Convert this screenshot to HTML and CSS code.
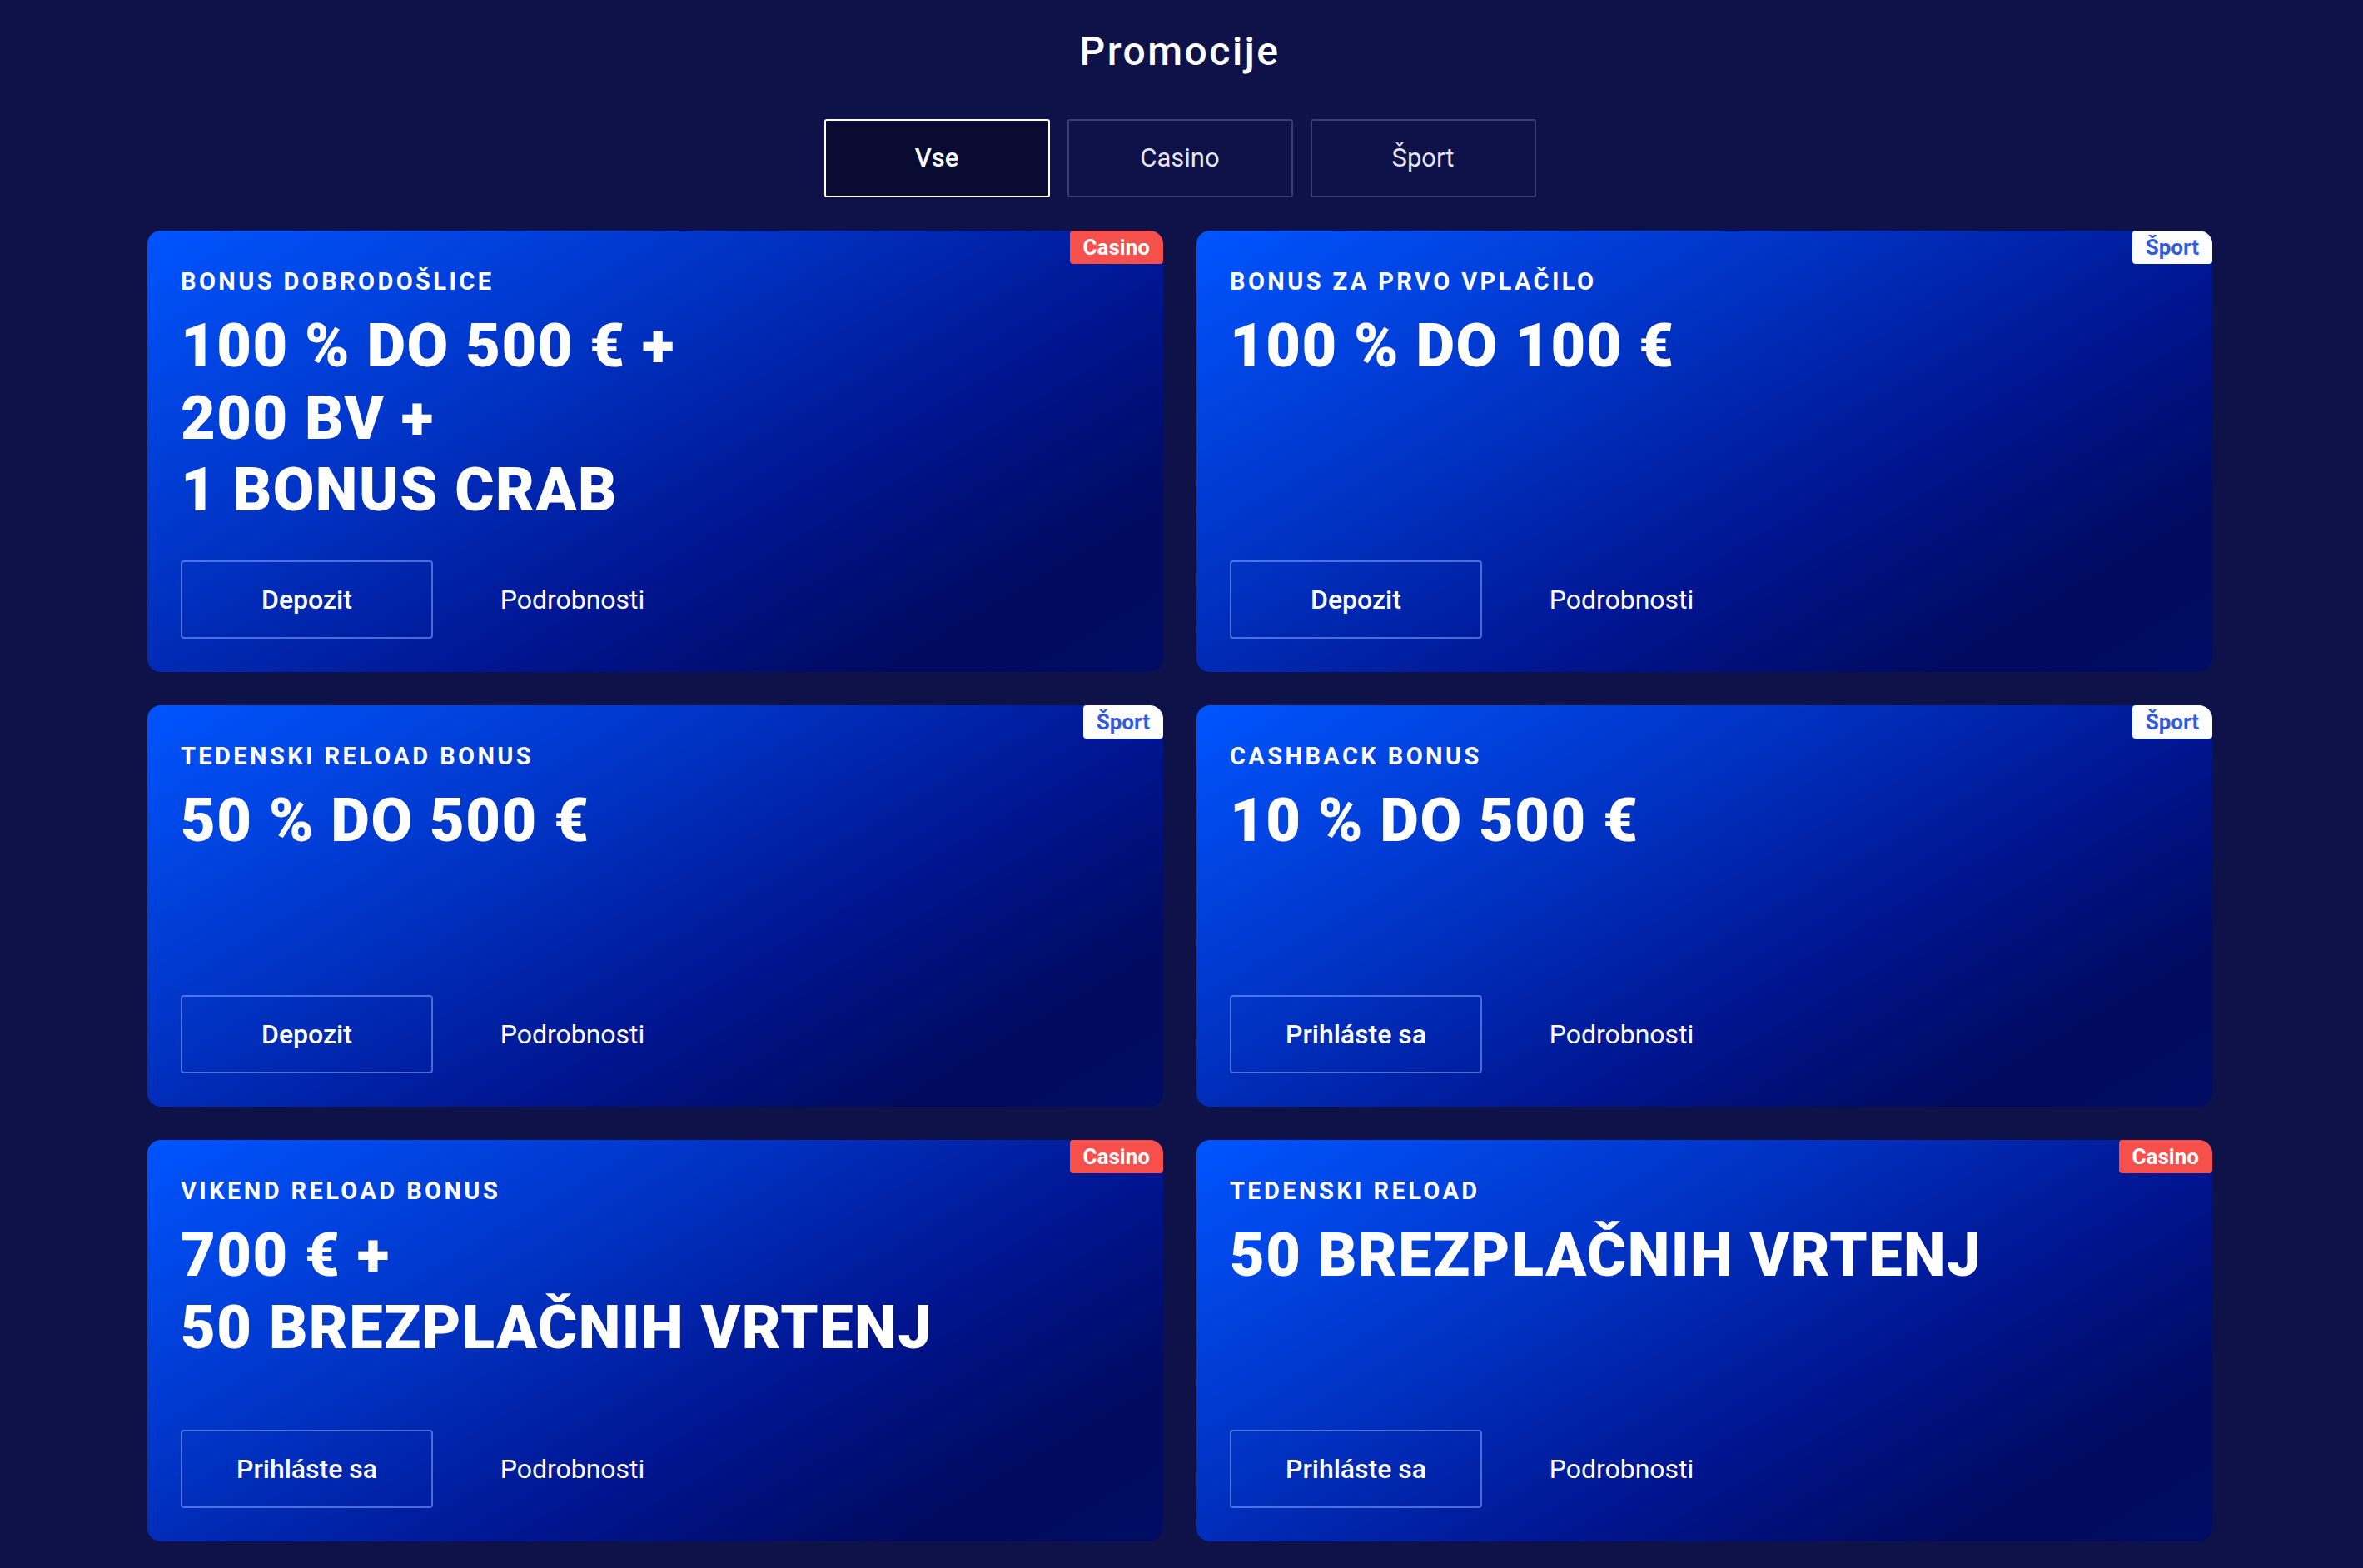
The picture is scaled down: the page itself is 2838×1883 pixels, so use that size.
FILE: index.html
```html
<!DOCTYPE html>
<html lang="sl">
<head>
  <meta charset="UTF-8" />
  <meta name="viewport" content="width=device-width, initial-scale=1.0"/>
  <title>Promocije</title>
  <link rel="stylesheet" href="styles.css">
</head>
<body>

  <main class="page">
    <h1>Promocije</h1>

    <nav class="tabs">
      <button class="tab active">Vse</button>
      <button class="tab">Casino</button>
      <button class="tab">Šport</button>
    </nav>

    <section class="promo-grid">

      <article class="promo">
        <span class="badge badge-casino">Casino</span>
        <p class="promo-label">Bonus dobrodošlice</p>
        <h2 class="promo-title">100 % do 500 € +<br>200 BV +<br>1 bonus crab</h2>
        <div class="promo-actions">
          <a href="#" class="btn btn-outline">Depozit</a>
          <a href="#" class="btn btn-plain">Podrobnosti</a>
        </div>
      </article>

      <article class="promo">
        <span class="badge badge-sport">Šport</span>
        <p class="promo-label">Bonus za prvo vplačilo</p>
        <h2 class="promo-title">100 % do 100 €</h2>
        <div class="promo-actions">
          <a href="#" class="btn btn-outline">Depozit</a>
          <a href="#" class="btn btn-plain">Podrobnosti</a>
        </div>
      </article>

      <article class="promo">
        <span class="badge badge-sport">Šport</span>
        <p class="promo-label">Tedenski reload bonus</p>
        <h2 class="promo-title">50 % do 500 €</h2>
        <div class="promo-actions">
          <a href="#" class="btn btn-outline">Depozit</a>
          <a href="#" class="btn btn-plain">Podrobnosti</a>
        </div>
      </article>

      <article class="promo">
        <span class="badge badge-sport">Šport</span>
        <p class="promo-label">Cashback bonus</p>
        <h2 class="promo-title">10 % do 500 €</h2>
        <div class="promo-actions">
          <a href="#" class="btn btn-outline">Prihláste sa</a>
          <a href="#" class="btn btn-plain">Podrobnosti</a>
        </div>
      </article>

      <article class="promo">
        <span class="badge badge-casino">Casino</span>
        <p class="promo-label">Vikend reload bonus</p>
        <h2 class="promo-title">700 € +<br>50 brezplačnih vrtenj</h2>
        <div class="promo-actions">
          <a href="#" class="btn btn-outline">Prihláste sa</a>
          <a href="#" class="btn btn-plain">Podrobnosti</a>
        </div>
      </article>

      <article class="promo">
        <span class="badge badge-casino">Casino</span>
        <p class="promo-label">Tedenski reload</p>
        <h2 class="promo-title">50 brezplačnih vrtenj</h2>
        <div class="promo-actions">
          <a href="#" class="btn btn-outline">Prihláste sa</a>
          <a href="#" class="btn btn-plain">Podrobnosti</a>
        </div>
      </article>

    </section>
  </main>

</body>
</html>
```

FILE: styles.css
```css
body {
  margin: 0;
  padding-right: 4px;
  font-family: Roboto, 'Liberation Sans', sans-serif;
  background: #0e1249;
  color: #fff;
}

.page {
  width: 2480px;
  margin: 0 auto;
  padding: 33px 0 40px;
}

h1 {
  margin: 0;
  font-size: 48px;
  font-weight: 500;
  line-height: 1.2;
  letter-spacing: 2.5px;
  text-align: center;
}

/* filter tabs */
.tabs {
  display: flex;
  justify-content: center;
  gap: 21px;
  margin-top: 52px;
}

.tab {
  width: 271px;
  height: 94px;
  font-family: inherit;
  font-size: 31px;
  font-weight: 400;
  color: #e6e7f3;
  background: transparent;
  border: 2px solid #373d6d;
  border-radius: 3px;
  cursor: pointer;
}

.tab.active {
  font-weight: 500;
  color: #fff;
  background: #0a0b33;
  border-color: #fff;
}

/* promo cards */
.promo-grid {
  display: grid;
  grid-template-columns: 1fr 1fr;
  gap: 40px;
  margin-top: 40px;
}

.promo {
  position: relative;
  display: flex;
  flex-direction: column;
  min-height: 482px;
  box-sizing: border-box;
  padding: 44px 40px 40px;
  border-radius: 16px;
  background: linear-gradient(150deg, #0055ff 0%, #0033c4 35%, #001590 62%, #000a5e 85%, #000d62 100%);
}

.badge {
  position: absolute;
  top: 0;
  right: 0;
  padding: 5px 16px 4px;
  font-size: 26px;
  font-weight: 700;
  line-height: 1.2;
  border-radius: 4px 16px 4px 4px;
}

.badge-casino {
  background: #f5504c;
  color: #fff;
}

.badge-sport {
  background: #fff;
  color: #2f5be0;
}

.promo-label {
  margin: 0;
  font-size: 29px;
  font-weight: 700;
  line-height: 1.2;
  letter-spacing: 3.4px;
  text-transform: uppercase;
}

.promo-title {
  margin: 18px 0 40px;
  font-size: 72px;
  font-weight: 900;
  line-height: 1.2;
  letter-spacing: 1.5px;
  text-transform: uppercase;
}

.promo-actions {
  display: flex;
  gap: 16px;
  margin-top: auto;
}

.btn {
  display: flex;
  align-items: center;
  justify-content: center;
  width: 303px;
  height: 94px;
  box-sizing: border-box;
  font-size: 32px;
  color: #fff;
  text-decoration: none;
  border: 2px solid transparent;
  border-radius: 4px;
}

.btn-outline {
  font-weight: 500;
  border-color: rgba(140, 170, 255, 0.55);
}

.btn-plain {
  font-weight: 400;
}
```
